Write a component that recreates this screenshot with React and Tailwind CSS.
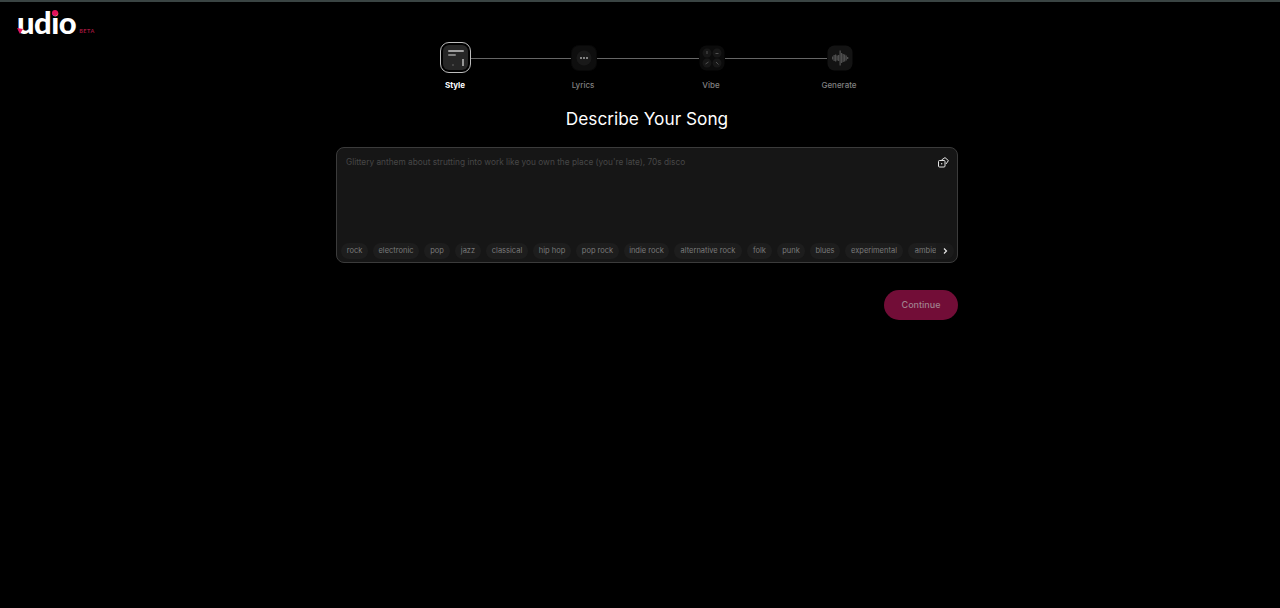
import React from 'react';

const genres = [
  ['rock', 'w-[27px]'],
  ['electronic', 'w-[46px]'],
  ['pop', 'w-[26px]'],
  ['jazz', 'w-[26px]'],
  ['classical', 'w-[42px]'],
  ['hip hop', 'w-[38px]'],
  ['pop rock', 'w-[43px]'],
  ['indie rock', 'w-[45px]'],
  ['alternative rock', 'w-[68px]'],
  ['folk', 'w-[25px]'],
  ['punk', 'w-[28px]'],
  ['blues', 'w-[30px]'],
  ['experimental', 'w-[58px]'],
  ['ambient', 'w-[42px]'],
];

function Logo() {
  return (
    <div className="relative flex items-end h-[26px] font-['Lato',sans-serif] text-white">
      <span className="text-[31px] leading-[26px] font-black tracking-[-0.5px]">udio</span>
      <span className="ml-[3px] text-[5.5px] leading-[8px] font-bold tracking-[0.5px] text-[#a3173f]">BETA</span>
      {/* pink dot + notch */}
      <span className="absolute left-[35px] top-[1px] w-[6px] h-[6px] rounded-full bg-[#e5105a]" />
      <svg className="absolute left-0 top-[19px]" width="6" height="6" viewBox="0 0 6 6">
        <path d="M0 0 L6 1 L3 6 Z" fill="#e5105a" />
      </svg>
    </div>
  );
}

function StyleIcon() {
  return (
    <div className="w-[31px] h-[31px] shrink-0 rounded-[9px] border border-[#bdbdbd] bg-black p-[2px]">
      <svg className="w-full h-full" viewBox="0 0 25 25">
        <rect width="25" height="25" rx="6" fill="#262626" />
        <rect x="5" y="5" width="16" height="2" rx="1" fill="#a0a0a0" />
        <rect x="5" y="9" width="8" height="2" rx="1" fill="#808080" />
        <rect x="9" y="19" width="2" height="2" fill="#444" />
        <rect x="19" y="14" width="2" height="7" fill="#969696" />
      </svg>
    </div>
  );
}

function LyricsIcon() {
  return (
    <svg className="shrink-0" width="26" height="26" viewBox="0 0 26 26">
      <rect x="0.5" y="0.5" width="25" height="25" rx="7" fill="#0e0e0e" stroke="#080808" />
      <circle cx="13" cy="13" r="7.5" fill="#191919" />
      <rect x="9" y="12" width="2" height="2" fill="#808080" />
      <rect x="12" y="12" width="2" height="2" fill="#808080" />
      <rect x="15" y="12" width="2" height="2" fill="#808080" />
    </svg>
  );
}

function VibeIcon() {
  return (
    <svg className="shrink-0" width="26" height="26" viewBox="0 0 26 26">
      <rect x="0.5" y="0.5" width="25" height="25" rx="7" fill="#0b0b0b" />
      <circle cx="8" cy="8" r="4.5" fill="#171717" />
      <circle cx="18" cy="8" r="4.5" fill="#171717" />
      <circle cx="8" cy="18" r="4.5" fill="#171717" />
      <circle cx="18" cy="18" r="4.5" fill="#171717" />
      <path d="M8 6v3M16.5 8.5h3M6.5 19l3-2M17 17l2.5 2.5" stroke="#505050" strokeWidth="1" />
    </svg>
  );
}

function GenerateIcon() {
  const bars = [[5, 3], [6.5, 6], [8, 7], [9.5, 5], [11, 6], [12.5, 15], [14, 10], [15.5, 8], [17, 7], [18.5, 5], [20, 2]];
  return (
    <svg className="shrink-0" width="26" height="26" viewBox="0 0 26 26">
      <rect x="0.5" y="0.5" width="25" height="25" rx="7" fill="#131313" />
      {bars.map(([x, h]) => (
        <rect key={x} x={x} y={13 - h / 2} width="1.3" height={h} fill="#4e4e4e" />
      ))}
    </svg>
  );
}

export default function App() {
  return (
    <div className="h-[608px] bg-black border-t-2 border-[#3a4443] flex font-['Inter',sans-serif] overflow-hidden">
      <div className="w-[336px] shrink-0 pl-[17px] pt-[7px]">
        <Logo />
      </div>

      <div className="w-[622px] shrink-0">
        {/* stepper */}
        <div className="ml-[104px] mt-[40px] flex items-center">
          <StyleIcon />
          <div className="w-[100px] h-[1px] mt-[1px] bg-[#666]" />
          <LyricsIcon />
          <div className="w-[102px] h-[1px] mt-[1px] bg-[#666]" />
          <VibeIcon />
          <div className="w-[102px] h-[1px] mt-[1px] bg-[#666]" />
          <GenerateIcon />
        </div>
        <div className="ml-[55px] mt-[6px] flex text-[8px] leading-[12px] text-center font-medium text-[#808080]">
          <span className="w-[128px] font-bold text-white">Style</span>
          <span className="w-[128px]">Lyrics</span>
          <span className="w-[128px]">Vibe</span>
          <span className="w-[128px]">Generate</span>
        </div>

        <h1 className="mt-[14px] text-center text-[17.25px] leading-[28px] font-normal text-white">
          Describe Your Song
        </h1>

        {/* prompt card */}
        <div className="mt-[14px] h-[116px] rounded-[8px] border border-[#3b3b3b] bg-[#161616] flex flex-col overflow-hidden">
          <div className="flex-1 flex justify-between pl-[9px] pr-[9px] pt-[8px]">
            <span className="text-[8.3px] leading-[12px] text-[#474747]">
              Glittery anthem about strutting into work like you own the place (you're late), 70s disco
            </span>
            <svg width="11" height="11" viewBox="0 0 11 11" fill="none" stroke="#e5e5e5" strokeWidth="1" className="mt-[1px] translate-x-[1px]">
              <rect x="0.5" y="3.5" width="6.5" height="6.5" rx="1" />
              <path d="M3.5 3 7 0.6 10.4 3.6 8 7" />
              <circle cx="3.7" cy="6.7" r="0.7" fill="#e5e5e5" stroke="none" />
            </svg>
          </div>
          <div className="relative flex gap-[5px] pl-[4px] pb-[3px] overflow-hidden">
            {genres.map(([g, w]) => (
              <span key={g} className={`${w} shrink-0 h-[16px] rounded-full bg-[#1d1d1d] text-[7.5px] leading-[16px] text-center text-[#7a7a7a] whitespace-nowrap`}>
                {g}
              </span>
            ))}
            <div className="absolute right-[3px] top-0 w-[18px] h-[16px] rounded-r-full bg-[#1b1b1b] flex items-center justify-center">
              <svg width="8" height="8" viewBox="0 0 8 8" fill="none" stroke="#e5e5e5" strokeWidth="1.2">
                <path d="M3 1.5 5.5 4 3 6.5" />
              </svg>
            </div>
          </div>
        </div>

        <div className="mt-[27px] flex justify-end">
          <button className="w-[74px] h-[30px] rounded-full bg-[#720d37] text-[9px] font-medium text-[#a0808e]">
            Continue
          </button>
        </div>
      </div>
    </div>
  );
}
